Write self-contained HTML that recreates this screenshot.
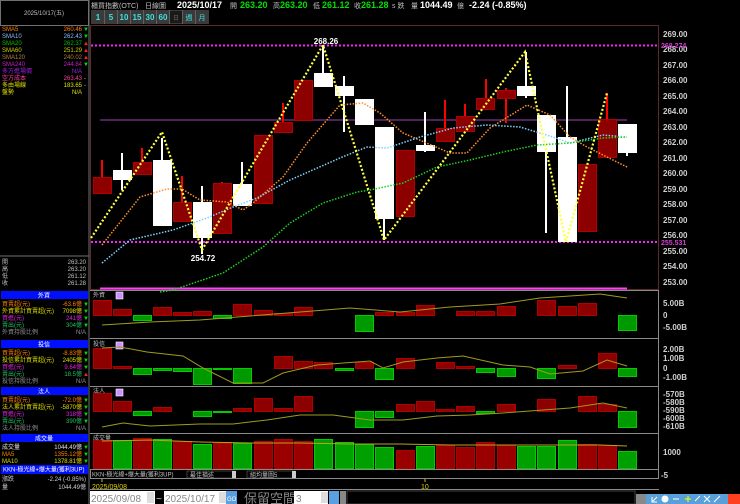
<!DOCTYPE html>
<html><head><meta charset="utf-8"><style>
html,body{margin:0;padding:0;background:#000;width:740px;height:504px;overflow:hidden}
svg{display:block}
text{font-family:"Liberation Sans","Noto Sans CJK TC",sans-serif}
.s{font-size:7px}
.l{font-size:6px}
.ax{font-size:8px;font-weight:bold;fill:#d0d0d0}
</style></head><body>
<svg width="740" height="504" viewBox="0 0 740 504" xmlns="http://www.w3.org/2000/svg">
<rect width="740" height="504" fill="#000"/>
<rect x="0.5" y="0.5" width="88" height="25" fill="none" stroke="#707070"/>
<text x="44" y="15" class="l" fill="#c0c0c0" text-anchor="middle">2025/10/17(五)</text>
<line x1="89" y1="0" x2="89" y2="504" stroke="#707070"/>
<g class="l">
<text x="2" y="31" fill="#ff8000">SMA5</text><text x="82" y="31" fill="#ff8000" text-anchor="end">260.46</text><text x="83" y="31" fill="#00e000">▼</text>
<text x="2" y="38" fill="#80c0ff">SMA10</text><text x="82" y="38" fill="#80c0ff" text-anchor="end">262.43</text><text x="83" y="38" fill="#00e000">▼</text>
<text x="2" y="45" fill="#00c000">SMA20</text><text x="82" y="45" fill="#00c000" text-anchor="end">262.37</text><text x="83" y="45" fill="#ff2020">▲</text>
<text x="2" y="52" fill="#d0d000">SMA60</text><text x="82" y="52" fill="#d0d000" text-anchor="end">251.29</text><text x="83" y="52" fill="#ff2020">▲</text>
<text x="2" y="59" fill="#b08040">SMA120</text><text x="82" y="59" fill="#b08040" text-anchor="end">240.02</text><text x="83" y="59" fill="#ff2020">▲</text>
<text x="2" y="66" fill="#c020c0">SMA240</text><text x="82" y="66" fill="#c020c0" text-anchor="end">244.84</text><text x="83" y="66" fill="#00e000">▼</text>
<text x="2" y="73" fill="#a020e0">多方進場價</text><text x="82" y="73" fill="#a020e0" text-anchor="end">N/A</text>
<text x="2" y="80" fill="#ff40a0">空方成本</text><text x="82" y="80" fill="#ff40a0" text-anchor="end">263.43</text><text x="84" y="80" fill="#ccc">-</text>
<text x="2" y="87" fill="#e0e000">多由場線</text><text x="82" y="87" fill="#e0e000" text-anchor="end">183.65</text><text x="84" y="87" fill="#ccc">-</text>
<text x="2" y="94" fill="#e0e000">盤勢</text><text x="82" y="94" fill="#e0e000" text-anchor="end">N/A</text>
</g>
<line x1="0" y1="256" x2="89" y2="256" stroke="#707070"/>
<g class="l" fill="#c0c0c0">
<text x="2" y="264">開</text><text x="86" y="264" text-anchor="end">263.20</text>
<text x="2" y="271">高</text><text x="86" y="271" text-anchor="end">263.20</text>
<text x="2" y="278">低</text><text x="86" y="278" text-anchor="end">261.12</text>
<text x="2" y="285">收</text><text x="86" y="285" text-anchor="end">261.28</text>
</g>
<g class="l">
<rect x="1" y="291" width="87" height="8" fill="#0010ff"/><text x="44" y="297.5" fill="#fff" text-anchor="middle">外資</text>
<text x="2" y="306" fill="#ff8000">買賣超(元)</text><text x="82" y="306" fill="#ff8000" text-anchor="end">-63.6億</text><text x="83" y="306" fill="#00e000">▼</text>
<text x="2" y="313" fill="#e0e000">外資累計買賣超(元)</text><text x="82" y="313" fill="#e0e000" text-anchor="end">7098億</text><text x="83" y="313" fill="#00e000">▼</text>
<text x="2" y="320" fill="#e020e0">買進(元)</text><text x="82" y="320" fill="#e020e0" text-anchor="end">241億</text><text x="83" y="320" fill="#00e000">▼</text>
<text x="2" y="327" fill="#20c060">賣出(元)</text><text x="82" y="327" fill="#20c060" text-anchor="end">304億</text><text x="83" y="327" fill="#00e000">▼</text>
<text x="2" y="334" fill="#909090">外資持股比例</text><text x="86" y="334" fill="#909090" text-anchor="end">N/A</text>
<rect x="1" y="340" width="87" height="8" fill="#0010ff"/><text x="44" y="346.5" fill="#fff" text-anchor="middle">投信</text>
<text x="2" y="355" fill="#ff8000">買賣超(元)</text><text x="82" y="355" fill="#ff8000" text-anchor="end">-8.83億</text><text x="83" y="355" fill="#00e000">▼</text>
<text x="2" y="362" fill="#e0e000">投信累計買賣超(元)</text><text x="82" y="362" fill="#e0e000" text-anchor="end">2405億</text><text x="83" y="362" fill="#00e000">▼</text>
<text x="2" y="369" fill="#e020e0">買進(元)</text><text x="82" y="369" fill="#e020e0" text-anchor="end">9.64億</text><text x="83" y="369" fill="#00e000">▼</text>
<text x="2" y="376" fill="#20c060">賣出(元)</text><text x="82" y="376" fill="#20c060" text-anchor="end">18.5億</text><text x="83" y="376" fill="#ff2020">▲</text>
<text x="2" y="383" fill="#909090">投信持股比例</text><text x="86" y="383" fill="#909090" text-anchor="end">N/A</text>
<rect x="1" y="387" width="87" height="8" fill="#0010ff"/><text x="44" y="393.5" fill="#fff" text-anchor="middle">法人</text>
<text x="2" y="402" fill="#ff8000">買賣超(元)</text><text x="82" y="402" fill="#ff8000" text-anchor="end">-72.0億</text><text x="83" y="402" fill="#00e000">▼</text>
<text x="2" y="409" fill="#e0e000">法人累計買賣超(元)</text><text x="82" y="409" fill="#e0e000" text-anchor="end">-5870億</text><text x="83" y="409" fill="#00e000">▼</text>
<text x="2" y="416" fill="#e020e0">買進(元)</text><text x="82" y="416" fill="#e020e0" text-anchor="end">318億</text><text x="83" y="416" fill="#00e000">▼</text>
<text x="2" y="423" fill="#20c060">賣出(元)</text><text x="82" y="423" fill="#20c060" text-anchor="end">390億</text><text x="83" y="423" fill="#00e000">▼</text>
<text x="2" y="430" fill="#909090">法人持股比例</text><text x="86" y="430" fill="#909090" text-anchor="end">N/A</text>
<rect x="1" y="434" width="87" height="8" fill="#0010ff"/><text x="44" y="440.5" fill="#fff" text-anchor="middle">成交量</text>
<text x="2" y="449" fill="#e0e0e0">成交量</text><text x="82" y="449" fill="#e0e0e0" text-anchor="end">1044.49億</text><text x="83" y="449" fill="#00e000">▼</text>
<text x="2" y="456" fill="#ff8000">MA5</text><text x="82" y="456" fill="#ff8000" text-anchor="end">1355.12億</text><text x="83" y="456" fill="#00e000">▼</text>
<text x="2" y="463" fill="#e0e000">MA10</text><text x="82" y="463" fill="#e0e000" text-anchor="end">1378.81億</text><text x="83" y="463" fill="#00e000">▼</text>
<rect x="1" y="465" width="87" height="9" fill="#0010ff"/><text x="3" y="471.5" fill="#fff">KKN-極光線+爆大量(獲利3UP)</text>
<text x="2" y="481" fill="#d0d0d0">漲跌</text><text x="86" y="481" fill="#d0d0d0" text-anchor="end">-2.24 (-0.85%)</text>
<text x="2" y="489" fill="#d0d0d0">量</text><text x="86" y="489" fill="#d0d0d0" text-anchor="end">1044.49億</text>
</g>
<g font-size="8" fill="#c0c0c0">
<text x="91" y="8" class="s">櫃買指數(OTC)</text><text x="145" y="8" class="s">日線圖</text>
<text x="177" y="8" font-weight="bold" fill="#fff" font-size="9">2025/10/17</text>
<text x="230" y="8" class="s">開</text><text x="240" y="8" font-weight="bold" fill="#00e000" font-size="9">263.20</text>
<text x="273" y="8" class="s">高</text><text x="280" y="8" font-weight="bold" fill="#00e000" font-size="9">263.20</text>
<text x="313" y="8" class="s">低</text><text x="322" y="8" font-weight="bold" fill="#00e000" font-size="9">261.12</text>
<text x="354" y="8" class="s">收</text><text x="361" y="8" font-weight="bold" fill="#00e000" font-size="9">261.28</text>
<text x="392" y="8" class="s">s 跌</text><text x="411" y="8" class="s">量</text>
<text x="420" y="8" font-weight="bold" fill="#fff" font-size="9">1044.49</text><text x="457" y="8" class="s">億</text>
<text x="469" y="8" font-weight="bold" fill="#fff" font-size="9">-2.24 (-0.85%)</text>
</g>
<g font-size="8" font-weight="bold" fill="#40e0e0">
<rect x="91" y="10" width="118" height="14" fill="#3a3a3a"/>
<rect x="170" y="11" width="12" height="12" fill="#1a1a1a"/>
<g stroke="#606060"><line x1="104.5" y1="10" x2="104.5" y2="24"/><line x1="117.5" y1="10" x2="117.5" y2="24"/><line x1="130.5" y1="10" x2="130.5" y2="24"/><line x1="143.5" y1="10" x2="143.5" y2="24"/><line x1="156.5" y1="10" x2="156.5" y2="24"/><line x1="169.5" y1="10" x2="169.5" y2="24"/><line x1="182.5" y1="10" x2="182.5" y2="24"/><line x1="195.5" y1="10" x2="195.5" y2="24"/></g>
<text x="98" y="20" text-anchor="middle">1</text><text x="111" y="20" text-anchor="middle">5</text><text x="124" y="20" text-anchor="middle">10</text><text x="137" y="20" text-anchor="middle">15</text><text x="150" y="20" text-anchor="middle">30</text><text x="163" y="20" text-anchor="middle">60</text>
<text x="176" y="20" text-anchor="middle" font-size="6" fill="#666" font-weight="normal">日</text><text x="189" y="20" text-anchor="middle" font-size="7" font-weight="normal">週</text><text x="202" y="20" text-anchor="middle" font-size="7" font-weight="normal">月</text>
</g>
<rect x="90.5" y="25.5" width="568" height="264" fill="none" stroke="#5a2a2a"/>
<g stroke="#8a8a8a" fill="none">
<line x1="90" y1="290.5" x2="659" y2="290.5"/><line x1="90" y1="338.5" x2="659" y2="338.5"/>
<line x1="90" y1="386.5" x2="659" y2="386.5"/><line x1="90" y1="433.5" x2="659" y2="433.5"/>
<rect x="90.5" y="469.5" width="568" height="9"/>
<line x1="658.5" y1="290" x2="658.5" y2="470"/>
<line x1="90" y1="489.5" x2="659" y2="489.5"/>
</g>
<g class="ax">
<text x="663" y="37">269.00</text><text x="663" y="52">268.00</text><text x="663" y="68">267.00</text><text x="663" y="83">266.00</text><text x="663" y="99">265.00</text><text x="663" y="114">264.00</text><text x="663" y="130">263.00</text><text x="663" y="145">262.00</text><text x="663" y="161">261.00</text><text x="663" y="176">260.00</text><text x="663" y="192">259.00</text><text x="663" y="207">258.00</text><text x="663" y="223">257.00</text><text x="663" y="238">256.00</text><text x="663" y="254">255.00</text><text x="663" y="269">254.00</text><text x="663" y="285">253.00</text>
<text x="661" y="48" fill="#d040d0" font-size="7">268.274</text><text x="661" y="245" fill="#d040d0" font-size="7">255.531</text>
<text x="663" y="306">5.00B</text><text x="663" y="318">0</text><text x="663" y="330">-5.00B</text>
<text x="663" y="352">2.00B</text><text x="663" y="361">1.00B</text><text x="663" y="371">0</text><text x="663" y="380">-1.00B</text>
<text x="663" y="397">-570B</text><text x="663" y="405">-580B</text><text x="663" y="413">-590B</text><text x="663" y="421">-600B</text><text x="663" y="429">-610B</text>
<text x="663" y="455">1000</text><text x="661" y="478">-5</text>
</g>
<line x1="91" y1="45.5" x2="658" y2="45.5" stroke="#ff20ff" stroke-width="2" stroke-dasharray="2 2"/>
<line x1="91" y1="242" x2="658" y2="242" stroke="#ff20ff" stroke-width="2" stroke-dasharray="2 2"/>
<line x1="100" y1="120" x2="627" y2="120" stroke="#a040b0" stroke-width="1"/>
<line x1="100" y1="288.5" x2="627" y2="288.5" stroke="#ff40ff" stroke-width="2"/>
<g stroke-width="2">
<g stroke="#ff0000">
<line x1="102" y1="160" x2="102" y2="177"/><line x1="142" y1="148" x2="142" y2="162"/><line x1="182" y1="176" x2="182" y2="202"/><line x1="222" y1="182" x2="222" y2="183"/><line x1="283" y1="103" x2="283" y2="122"/><line x1="445" y1="100" x2="445" y2="128"/><line x1="465" y1="104" x2="465" y2="116"/><line x1="486" y1="79" x2="486" y2="98"/><line x1="506" y1="88" x2="506" y2="123"/><line x1="607" y1="93" x2="607" y2="119"/>
</g>
<g stroke="#ffffff">
<line x1="122" y1="153" x2="122" y2="190"/><line x1="162" y1="138" x2="162" y2="160"/><line x1="202" y1="186" x2="202" y2="254"/><line x1="242" y1="162" x2="242" y2="184"/><line x1="323" y1="45" x2="323" y2="87"/><line x1="344" y1="76" x2="344" y2="132"/><line x1="384" y1="219" x2="384" y2="240"/><line x1="425" y1="112" x2="425" y2="152"/><line x1="526" y1="52" x2="526" y2="98"/><line x1="546" y1="152" x2="546" y2="233"/><line x1="567" y1="86" x2="567" y2="137"/><line x1="627" y1="153" x2="627" y2="156"/>
</g>
</g>
<g fill="#8c0000" stroke="#b00000">
<rect x="93.5" y="177.5" width="18" height="16"/><rect x="133.5" y="162.5" width="18" height="12"/><rect x="173.5" y="202.5" width="18" height="19"/><rect x="213.5" y="183.5" width="18" height="50"/><rect x="254.5" y="135.5" width="18" height="68"/><rect x="274.5" y="122.5" width="18" height="10"/><rect x="294.5" y="80.5" width="18" height="40"/><rect x="396.5" y="150.5" width="18" height="66"/><rect x="436.5" y="128.5" width="18" height="13"/><rect x="456.5" y="116.5" width="18" height="15"/><rect x="476.5" y="98.5" width="18" height="11"/><rect x="497.5" y="90.5" width="18" height="8"/><rect x="578.5" y="164.5" width="18" height="67"/><rect x="598.5" y="119.5" width="18" height="38"/>
</g>
<g fill="#ffffff">
<rect x="113" y="170" width="19" height="10"/><rect x="153" y="160" width="19" height="66"/><rect x="193" y="202" width="19" height="36"/><rect x="233" y="184" width="19" height="22"/><rect x="314" y="73" width="19" height="14"/><rect x="335" y="86" width="19" height="10"/><rect x="355" y="99" width="19" height="26"/><rect x="375" y="127" width="19" height="92"/><rect x="416" y="145" width="19" height="6"/><rect x="517" y="86" width="19" height="10"/><rect x="537" y="115" width="19" height="37"/><rect x="558" y="137" width="19" height="105"/><rect x="618" y="124" width="19" height="29"/>
</g>
<g fill="none" stroke-width="1.5" stroke-dasharray="1.5 1.5">
<polyline stroke="#ff9030" points="102,245 140,197 167,189 182,189 200,200 227,202 243,210 253,203 283,177 307,143 340,105 363,103 380,113 403,133 450,153 467,153 490,128 527,105 550,115 570,137 587,147 627,167"/>
<polyline stroke="#80d0ff" points="102,263 130,240 173,230 207,218 233,207 257,198 290,180 340,158 367,147 387,148 420,137 453,128 487,125 520,127 553,137 570,143 603,135 627,137"/>
<polyline stroke="#20d020" points="160,292 173,290 223,273 263,247 290,223 323,203 357,192 370,190 403,183 437,167 470,160 503,152 537,145 570,143 603,138 627,137"/>
<polyline stroke="#ffff40" stroke-width="2.2" stroke-dasharray="2 2" points="91,238 162,132 202,250 323,45 384,240 525,52 566,242 607,93"/>
</g>
<text x="326" y="44" font-size="8" font-weight="bold" fill="#fff" text-anchor="middle">268.26</text>
<text x="203" y="261" font-size="8" font-weight="bold" fill="#fff" text-anchor="middle">254.72</text>
<g class="l" fill="#c0c0c0">
<text x="93" y="297">外資</text><text x="93" y="346">投信</text><text x="93" y="393">法人</text><text x="93" y="440">成交量</text>
</g>
<g fill="#d090ff" stroke="#fff" stroke-width="0.6">
<rect x="116" y="292" width="7" height="7"/><rect x="116" y="342" width="7" height="7"/><rect x="116" y="389" width="7" height="7"/>
</g>
<g fill="#8c0000" stroke="#b00000">
<rect x="93.5" y="300.5" width="18" height="15"/><rect x="113.5" y="309.5" width="18" height="6"/><rect x="153.5" y="307.5" width="18" height="8"/><rect x="173.5" y="312.5" width="18" height="3"/><rect x="193.5" y="311.5" width="18" height="4"/><rect x="233.5" y="304.5" width="18" height="11"/><rect x="254.5" y="310.5" width="18" height="5"/><rect x="274.5" y="313.5" width="18" height="2"/><rect x="294.5" y="307.5" width="18" height="8"/><rect x="375.5" y="312.5" width="18" height="3"/><rect x="396.5" y="312.5" width="18" height="3"/><rect x="416.5" y="305.5" width="18" height="10"/><rect x="456.5" y="311.5" width="18" height="4"/><rect x="476.5" y="311.5" width="18" height="4"/><rect x="497.5" y="306.5" width="18" height="9"/><rect x="537.5" y="300.5" width="18" height="15"/><rect x="558.5" y="306.5" width="18" height="9"/><rect x="578.5" y="303.5" width="18" height="12"/>
</g>
<g fill="#009a00" stroke="#00cc00">
<rect x="133.5" y="315.5" width="18" height="5"/><rect x="213.5" y="315.5" width="18" height="3"/><rect x="355.5" y="315.5" width="18" height="16"/><rect x="618.5" y="315.5" width="18" height="15"/>
</g>
<polyline fill="none" stroke="#a09a20" points="102,325 150,322 200,320 250,316 300,312 350,308 400,312 450,307 500,304 540,298 570,296 600,294 627,298"/>
<g fill="#8c0000" stroke="#b00000">
<rect x="93.5" y="348.5" width="18" height="20"/><rect x="113.5" y="366.5" width="18" height="2"/><rect x="274.5" y="356.5" width="18" height="12"/><rect x="294.5" y="361.5" width="18" height="7"/><rect x="314.5" y="362.5" width="18" height="6"/><rect x="355.5" y="362.5" width="18" height="6"/><rect x="396.5" y="358.5" width="18" height="10"/><rect x="436.5" y="362.5" width="18" height="6"/><rect x="456.5" y="366.5" width="18" height="2"/><rect x="558.5" y="365.5" width="18" height="3"/><rect x="598.5" y="353.5" width="18" height="15"/>
</g>
<g fill="#009a00" stroke="#00cc00">
<rect x="133.5" y="368.5" width="18" height="6"/><rect x="153.5" y="368.5" width="18" height="2"/><rect x="173.5" y="368.5" width="18" height="3"/><rect x="193.5" y="368.5" width="18" height="16"/><rect x="213.5" y="368.5" width="18" height="1"/><rect x="233.5" y="368.5" width="18" height="15"/><rect x="335.5" y="368.5" width="18" height="2"/><rect x="375.5" y="368.5" width="18" height="11"/><rect x="476.5" y="368.5" width="18" height="4"/><rect x="497.5" y="368.5" width="18" height="8"/><rect x="537.5" y="368.5" width="18" height="10"/><rect x="618.5" y="368.5" width="18" height="8"/>
</g>
<polyline fill="none" stroke="#a09a20" points="102,348 120,347 147,352 183,356 203,368 233,383 263,383 283,373 317,365 370,361 383,368 403,362 437,358 463,356 503,365 530,367 550,374 583,371 607,360 627,366"/>
<g fill="#8c0000" stroke="#b00000">
<rect x="93.5" y="393.5" width="18" height="18"/><rect x="113.5" y="401.5" width="18" height="10"/><rect x="153.5" y="407.5" width="18" height="4"/><rect x="233.5" y="408.5" width="18" height="3"/><rect x="254.5" y="398.5" width="18" height="13"/><rect x="274.5" y="408.5" width="18" height="3"/><rect x="294.5" y="396.5" width="18" height="15"/><rect x="396.5" y="404.5" width="18" height="7"/><rect x="416.5" y="401.5" width="18" height="10"/><rect x="436.5" y="409.5" width="18" height="2"/><rect x="456.5" y="406.5" width="18" height="5"/><rect x="497.5" y="404.5" width="18" height="7"/><rect x="537.5" y="399.5" width="18" height="12"/><rect x="578.5" y="396.5" width="18" height="15"/><rect x="598.5" y="404.5" width="18" height="7"/>
</g>
<g fill="#009a00" stroke="#00cc00">
<rect x="133.5" y="411.5" width="18" height="4"/><rect x="193.5" y="411.5" width="18" height="5"/><rect x="213.5" y="411.5" width="18" height="1"/><rect x="355.5" y="411.5" width="18" height="16"/><rect x="375.5" y="411.5" width="18" height="6"/><rect x="476.5" y="411.5" width="18" height="2"/><rect x="618.5" y="411.5" width="18" height="16"/>
</g>
<polyline fill="none" stroke="#a09a20" points="102,427 123,423 150,426 200,424 233,424 267,420 300,415 333,415 370,420 403,420 437,416 470,415 503,413 543,410 570,408 603,403 627,408"/>
<g fill="#9a0000" stroke="#b00000">
<rect x="93.5" y="440.5" width="18" height="28"/><rect x="133.5" y="438.5" width="18" height="30"/><rect x="173.5" y="441.5" width="18" height="27"/><rect x="213.5" y="443.5" width="18" height="25"/><rect x="254.5" y="441.5" width="18" height="27"/><rect x="274.5" y="439.5" width="18" height="29"/><rect x="294.5" y="441.5" width="18" height="27"/><rect x="396.5" y="450.5" width="18" height="18"/><rect x="436.5" y="445.5" width="18" height="23"/><rect x="456.5" y="447.5" width="18" height="21"/><rect x="476.5" y="442.5" width="18" height="26"/><rect x="497.5" y="445.5" width="18" height="23"/><rect x="578.5" y="444.5" width="18" height="24"/><rect x="598.5" y="445.5" width="18" height="23"/>
</g>
<g fill="#00a000" stroke="#00cc00">
<rect x="113.5" y="440.5" width="18" height="28"/><rect x="153.5" y="439.5" width="18" height="29"/><rect x="193.5" y="444.5" width="18" height="24"/><rect x="233.5" y="443.5" width="18" height="25"/><rect x="314.5" y="439.5" width="18" height="29"/><rect x="335.5" y="442.5" width="18" height="26"/><rect x="355.5" y="444.5" width="18" height="24"/><rect x="375.5" y="447.5" width="18" height="21"/><rect x="416.5" y="446.5" width="18" height="22"/><rect x="517.5" y="446.5" width="18" height="22"/><rect x="537.5" y="446.5" width="18" height="22"/><rect x="558.5" y="440.5" width="18" height="28"/><rect x="618.5" y="451.5" width="18" height="17"/>
</g>
<polyline fill="none" stroke="#c0a020" points="102,441 150,440 200,442 250,443 300,443 350,444 400,444 450,445 500,445 550,445 600,445 627,446"/>
<g class="l">
<text x="92" y="476.5" fill="#c0c0c0">KKN-極光線+爆大量(獲利3UP)</text>
<rect x="187" y="471" width="48" height="7" fill="#000" stroke="#777" stroke-width="0.5"/><text x="190" y="477" fill="#c0c0c0">最佳描述</text><rect x="232" y="471" width="4" height="7" fill="#ccc"/>
<rect x="247" y="471" width="48" height="7" fill="#000" stroke="#777" stroke-width="0.5"/><text x="250" y="477" fill="#c0c0c0">組均量圖5</text><rect x="292" y="471" width="4" height="7" fill="#ccc"/>
</g>
<line x1="102" y1="479" x2="102" y2="482" stroke="#d0c000"/>
<text x="92" y="489" font-size="7" fill="#e0d000">2025/09/08</text>
<line x1="425" y1="479" x2="425" y2="482" stroke="#d0c000"/>
<text x="421" y="489" font-size="7" fill="#e0d000">10</text>
<g font-size="10" fill="#888">
<rect x="90" y="491" width="65" height="13" fill="#fff"/><text x="91" y="502">2025/09/08</text><rect x="147" y="492" width="7" height="11" fill="#ddd"/>
<text x="156" y="502" fill="#ccc">~</text>
<rect x="164" y="491" width="62" height="13" fill="#fff"/><text x="165" y="502">2025/10/17</text><rect x="219" y="492" width="7" height="11" fill="#ddd"/>
<rect x="226" y="491" width="11" height="13" fill="#5aa0e0"/><text x="227" y="501" font-size="6" fill="#fff">GO</text>
<text x="244" y="503" font-size="13" fill="#888">保留空間</text>
<rect x="294" y="491" width="34" height="13" fill="#fff"/><text x="296" y="502">3</text><rect x="321" y="492" width="7" height="11" fill="#ddd"/>
<rect x="329" y="491" width="10" height="13" fill="#5aa0e0"/><rect x="340" y="491" width="6" height="13" fill="#888"/>
<rect x="347" y="491" width="288" height="13" fill="#000" stroke="#444"/>
<rect x="636" y="494" width="10" height="10" fill="#888"/>
<rect x="646" y="494" width="94" height="10" fill="#5aa0d8"/>
<rect x="728" y="494" width="12" height="10" fill="#ff4020"/>
</g>
<g stroke="#fff" stroke-width="1" fill="none">
<path d="M652 502 L657 497 M652 497 L652 502 L657 502"/><circle cx="665" cy="499" r="3" fill="#fff"/><line x1="673" y1="499" x2="679" y2="499"/><path d="M685 499 H691 M688 496 V502" stroke="#ff0"/><path d="M695 501 L700 496"/><path d="M704 496 L710 502 M710 496 L704 502"/><path d="M714 502 L720 496"/>
</g>
</svg>
</body></html>
